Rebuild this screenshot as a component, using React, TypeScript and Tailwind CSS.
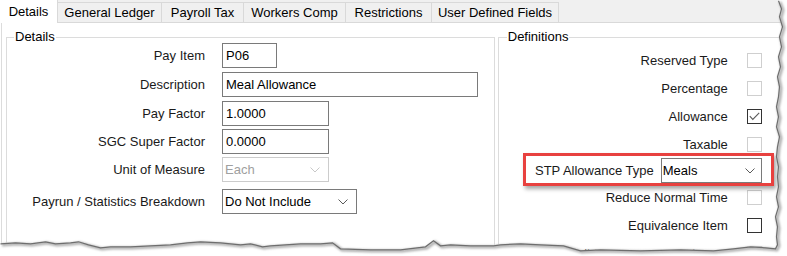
import React from "react";

function Chevron({ disabled }: { disabled?: boolean }) {
  return (
    <svg width="10" height="6" viewBox="0 0 10 6" className="shrink-0">
      <polyline
        points="0.5,0.5 5,5 9.5,0.5"
        fill="none"
        stroke={disabled ? "#c8c8c8" : "#5a5a5a"}
        strokeWidth="1"
      />
    </svg>
  );
}

function TextBox({ value, w }: { value: string; w: string }) {
  return (
    <div className={`${w} h-[25px] border border-[#7a7a7a] bg-white pl-[3px] flex items-center text-[#000]`}>
      {value}
    </div>
  );
}

function Select({ value, w, disabled }: { value: string; w: string; disabled?: boolean }) {
  return (
    <div
      className={`${w} h-[25px] border ${
        disabled ? "border-[#cccccc] text-[#a0a0a0]" : "border-[#7a7a7a] text-[#000]"
      } bg-white pl-[2px] pr-[8px] flex items-center justify-between`}
    >
      <span>{value}</span>
      <Chevron disabled={disabled} />
    </div>
  );
}

function Check({ checked, enabled }: { checked?: boolean; enabled?: boolean }) {
  return (
    <div
      className={`w-[15px] h-[15px] border ${
        enabled ? "border-[#333333]" : "border-[#cfcfcf]"
      } bg-white flex items-center justify-center`}
    >
      {checked && (
        <svg width="11" height="9" viewBox="0 0 11 9">
          <polyline points="0.8,4.2 3.8,7.4 10.2,0.8" fill="none" stroke="#5a5a5a" strokeWidth="1.1" />
        </svg>
      )}
    </div>
  );
}

function LeftRow({ label, children, mt }: { label: string; children: React.ReactNode; mt: string }) {
  return (
    <div className={`flex items-center h-[25px] gap-[17px] ${mt}`}>
      <div className="w-[198px] text-right text-[#1a1a1a]">{label}</div>
      {children}
    </div>
  );
}

function CheckRow({ label, checked, enabled }: { label: string; checked?: boolean; enabled?: boolean }) {
  return (
    <div className="flex items-center justify-end h-[28px] gap-[19px]">
      <span className="text-[#1a1a1a]">{label}</span>
      <Check checked={checked} enabled={enabled} />
    </div>
  );
}

const rightEdge: [number, number][] = [
  [778, 0], [781, 8], [779, 16], [782, 26], [779, 36], [781, 46], [778, 56], [780, 66], [777, 76],
  [779, 86], [778, 96], [776, 106], [778, 116], [776, 126], [779, 136], [777, 146], [776, 156],
  [778, 166], [777, 176], [778, 186], [776, 196], [778, 206], [775, 216], [777, 226], [776, 236],
  [777, 244], [775, 248],
];
const bottomEdge: [number, number][] = [
  [765, 247], [750, 246], [733, 248], [713, 250], [680, 249], [640, 250], [600, 249], [580, 250],
  [563, 245], [540, 244], [520, 243], [500, 244], [493, 245], [470, 245], [450, 244], [440, 245],
  [433, 240], [425, 246], [400, 249], [370, 249], [340, 248], [332, 242], [320, 243], [300, 243],
  [285, 244], [270, 245], [262, 246], [250, 243], [240, 244], [220, 242], [200, 241], [187, 242],
  [170, 244], [150, 245], [130, 246], [110, 246], [100, 247], [88, 244], [78, 241], [70, 242],
  [55, 243], [45, 241], [30, 243], [15, 242], [0, 243],
];

function TornEdge() {
  const edge = [...rightEdge, ...bottomEdge];
  const line = edge.map(([x, y]) => `${x},${y}`).join(" ");
  const poly = line + " -2,243 -2,258 789,258 789,-2 778,-2";
  return (
    <svg
      width="787"
      height="256"
      viewBox="0 0 787 256"
      className="absolute left-0 top-0 pointer-events-none"
    >
      <defs>
        <filter id="blur" x="-10%" y="-10%" width="120%" height="120%">
          <feGaussianBlur stdDeviation="1.3" />
        </filter>
      </defs>
      <polygon points={poly} fill="#ffffff" />
      <polyline
        points={line}
        transform="translate(2,2)"
        fill="none"
        stroke="#b0b0b0"
        strokeWidth="3"
        filter="url(#blur)"
      />
      <polyline points={line} transform="translate(0.5,0.8)" fill="none" stroke="#6e6e6e" strokeWidth="1.2" />
    </svg>
  );
}

const tabs = [
  { label: "General Ledger", w: "w-[104px]" },
  { label: "Payroll Tax", w: "w-[82px]" },
  { label: "Workers Comp", w: "w-[102px]" },
  { label: "Restrictions", w: "w-[86px]" },
  { label: "User Defined Fields", w: "w-[127px]" },
];

export default function App() {
  return (
    <div className="relative w-[787px] h-[256px] overflow-hidden bg-white font-['Liberation_Sans',Arial,sans-serif] text-[13px] leading-[15px] text-black">
      {/* Tab strip */}
      <div className="flex h-[23px] bg-[#f0f0f0] border-b border-[#d9d9d9]">
        <div className="w-[58px] h-[23px] bg-white border-r border-[#d9d9d9] flex items-center justify-center relative z-10 pb-[1px]">
          Details
        </div>
        {tabs.map((t) => (
          <div
            key={t.label}
            className={`${t.w} h-[20px] self-end border-r border-t border-[#d9d9d9] bg-[#f0f0f0] flex items-center justify-center`}
          >
            {t.label}
          </div>
        ))}
      </div>

      {/* Tab page */}
      <div className="ml-[1px] h-[240px] border-l border-[#dcdcdc] pl-[4px] flex gap-[3px]">
        {/* Details group */}
        <div className="relative mt-[14px] w-[490px] h-[230px] border border-[#dcdcdc] pt-[5px]">
          <div className="absolute left-[7px] top-[-9px] px-[1px] bg-white">Details</div>
          <LeftRow label="Pay Item" mt="mt-0">
            <TextBox value="P06" w="w-[55px]" />
          </LeftRow>
          <LeftRow label="Description" mt="mt-[4px]">
            <TextBox value="Meal Allowance" w="w-[256px]" />
          </LeftRow>
          <LeftRow label="Pay Factor" mt="mt-[4px]">
            <TextBox value="1.0000" w="w-[107px]" />
          </LeftRow>
          <LeftRow label="SGC Super Factor" mt="mt-[3px]">
            <TextBox value="0.0000" w="w-[107px]" />
          </LeftRow>
          <LeftRow label="Unit of Measure" mt="mt-[3px]">
            <Select value="Each" w="w-[107px]" disabled />
          </LeftRow>
          <LeftRow label="Payrun / Statistics Breakdown" mt="mt-[7px]">
            <Select value="Do Not Include" w="w-[135px]" />
          </LeftRow>
        </div>

        {/* Definitions group */}
        <div className="relative mt-[14px] w-[290px] h-[230px] border border-[#dcdcdc] pt-[8px]">
          <div className="absolute left-[8px] top-[-9px] px-[1px] bg-white">Definitions</div>
          <div className="w-[263px] flex flex-col">
            <CheckRow label="Reserved Type" />
            <CheckRow label="Percentage" />
            <CheckRow label="Allowance" checked enabled />
            <CheckRow label="Taxable" />
            <div className="flex items-center justify-end h-[25px] gap-[7px]">
              <span className="text-[#1a1a1a]">STP Allowance Type</span>
              <div className="w-[101px] h-[25px] border border-[#7a7a7a] bg-white pl-[1px] pr-[6px] flex items-center justify-between">
                <span>Meals</span>
                <Chevron />
              </div>
            </div>
            <CheckRow label="Reduce Normal Time" />
            <CheckRow label="Equivalence Item" enabled />
            <CheckRow label="Holiday pay, comp or bonus" />
          </div>
        </div>
      </div>

      {/* Red highlight annotation */}
      <div className="absolute left-[523px] top-[153px] w-[251px] h-[33px] border-[3px] border-[#e8413f] shadow-[2px_3px_4px_rgba(0,0,0,0.35)] pointer-events-none" />

      <TornEdge />
    </div>
  );
}
